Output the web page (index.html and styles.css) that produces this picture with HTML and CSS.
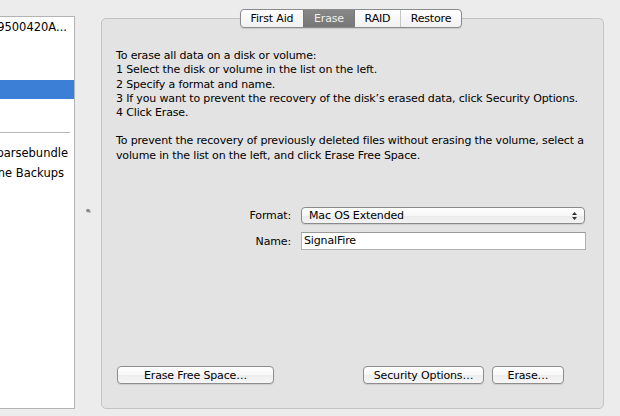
FILE: index.html
```html
<!DOCTYPE html>
<html lang="en">
<head>
  <meta charset="UTF-8">
  <title>Disk Utility - Erase</title>
  <link rel="stylesheet" href="styles.css">
</head>
<body>
  <div class="window">
    <!-- Disk list on the left, scrolled so only the tail of each name shows -->
    <div class="disk-list">
      <div class="row row-disk"><span>ST9500420A...</span></div>
      <div class="row"></div>
      <div class="row"></div>
      <div class="row selected"></div>
      <div class="row"></div>
      <div class="sep"></div>
      <div class="row row-image"><span>Disk.sparsebundle</span></div>
      <div class="row row-tm"><span>Time Machine Backups</span></div>
    </div>

    <div class="splitter"><span class="grip"></span></div>

    <div class="main">
      <div class="tabs">
        <div class="tab tab-aid">First Aid</div>
        <div class="tab tab-erase active">Erase</div>
        <div class="tab tab-raid">RAID</div>
        <div class="tab tab-restore">Restore</div>
      </div>
      <div class="panel">
        <p class="info">To erase all data on a disk or volume:<br>
        1 Select the disk or volume in the list on the left.<br>
        2 Specify a format and name.<br>
        3 If you want to prevent the recovery of the disk’s erased data, click Security Options.<br>
        4 Click Erase.</p>
        <p class="info">To prevent the recovery of previously deleted files without erasing the volume, select a<br>
        volume in the list on the left, and click Erase Free Space.</p>

        <div class="form">
          <div class="form-row">
            <label class="form-label">Format:</label>
            <div class="popup">
              <span>Mac OS Extended</span>
              <svg class="popup-arrows" width="7" height="10" viewBox="0 0 7 10">
                <path d="M1 4 L3.5 1 L6 4 Z M1 6 L3.5 9 L6 6 Z" fill="#333"/>
              </svg>
            </div>
          </div>
          <div class="form-row">
            <label class="form-label">Name:</label>
            <div class="text-field">SignalFire</div>
          </div>
        </div>

        <div class="buttons">
          <button class="btn btn-free">Erase Free Space…</button>
          <div class="buttons-right">
            <button class="btn btn-security">Security Options…</button>
            <button class="btn btn-erase">Erase…</button>
          </div>
        </div>
      </div>
    </div>
  </div>
</body>
</html>
```

FILE: styles.css
```css
body {
  margin: 0;
  background: #ececec;
  font-family: 'DejaVu Sans', 'Liberation Sans', sans-serif;
  font-size: 11px;
  letter-spacing: -0.15px;
  color: #000;
  width: 620px;
  height: 416px;
  overflow: hidden;
}
.window {
  display: flex;
  align-items: flex-start;
}

/* Left list */
.disk-list {
  margin-top: 16px;
  width: 74px;
  height: 391px;
  background: #fff;
  border: 1px solid #b4b4b4;
  border-left: none;
  overflow: hidden;
  font-size: 11.5px;
  letter-spacing: 0;
}
.row {
  height: 21px;
  line-height: 21px;
  white-space: nowrap;
  display: flex;
  justify-content: flex-end;
}
.row span {
  flex: none;
}
.row-disk { padding-right: 7px; }
.row-image { padding-right: 6px; height: 20px; line-height: 20px; }
.row-tm { padding-right: 10px; height: 20px; line-height: 20px; }
.row.selected {
  height: 19px;
  background: #3b7fd7;
}
.sep {
  height: 1px;
  width: 70px;
  background: #b8b8b8;
  margin: 12px 0 10px;
}

/* Splitter with the grip */
.splitter {
  width: 26px;
  height: 416px;
  display: flex;
  justify-content: center;
  padding-top: 209px;
  box-sizing: border-box;
}
.grip {
  width: 4px;
  height: 3px;
  margin-left: -1px;
  background: #8a8a8a;
  border-radius: 2px 2px 0 2px;
  box-shadow: 1px 1px 0 #c8c8c8;
}

/* Main tab area */
.main {
  margin-top: 9px;
  width: 503px;
  display: flex;
  flex-direction: column;
}
.tabs {
  align-self: center;
  display: flex;
  margin-left: -3px;
  height: 17px;
  border: 1px solid #8b8b8b;
  border-radius: 4px;
  background: linear-gradient(#ffffff, #f1f1f1);
  overflow: hidden;
  position: relative;
  z-index: 1;
  box-shadow: 0 1px 1px rgba(0, 0, 0, 0.12);
}
.tab {
  line-height: 17px;
  text-align: center;
  border-left: 1px solid #c6c6c6;
}
.tab-aid { width: 62px; border-left: none; }
.tab-erase { width: 50px; }
.tab-raid { width: 45px; }
.tab-restore { width: 60px; }
.tab.active {
  background: linear-gradient(#878787, #777777);
  color: #eeeeee;
  border-left-color: #777;
}
.tab.active + .tab {
  border-left-color: #777;
}
.panel {
  margin-top: -10px;
  height: 391px;
  box-sizing: border-box;
  background: #e3e3e3;
  border: 1px solid #c3c3c3;
  border-radius: 5px;
  padding: 30px 17px 24px 14px;
  display: flex;
  flex-direction: column;
}
.info {
  margin: 0 0 14px;
  line-height: 14.3px;
  white-space: nowrap;
}

/* Format / Name */
.form {
  margin-top: 30px;
  display: flex;
  flex-direction: column;
  gap: 8px;
}
.form-row {
  display: flex;
  align-items: center;
}
.form-label {
  flex: none;
  width: 175px;
  margin-right: 10px;
  text-align: right;
}
.popup {
  flex: none;
  width: 284px;
  height: 17px;
  box-sizing: border-box;
  border: 1px solid #8a8a8a;
  border-radius: 4px;
  background: linear-gradient(#ffffff 0%, #f6f6f6 50%, #ebebeb 51%, #f3f3f3 100%);
  display: flex;
  align-items: center;
  justify-content: space-between;
  padding: 0 6px 0 7px;
  box-shadow: 0 1px 1px rgba(0, 0, 0, 0.1);
}
.text-field {
  flex: none;
  width: 285px;
  height: 18px;
  box-sizing: border-box;
  border: 1px solid #b0b0b0;
  border-top-color: #9a9a9a;
  background: #fff;
  padding-left: 2px;
  line-height: 16px;
}

/* Bottom buttons */
.buttons {
  margin-top: auto;
  display: flex;
  justify-content: space-between;
  padding: 0 22px 0 1px;
}
.buttons-right {
  display: flex;
  gap: 8px;
}
.btn {
  height: 18px;
  padding: 0;
  border: 1px solid #8d8d8d;
  border-radius: 4px;
  background: linear-gradient(#ffffff 0%, #f7f7f7 50%, #ededed 51%, #f6f6f6 100%);
  font-family: 'DejaVu Sans', 'Liberation Sans', sans-serif;
  font-size: 11px;
  letter-spacing: -0.15px;
  color: #000;
  box-shadow: 0 1px 1px rgba(0, 0, 0, 0.1);
}
.btn-free { width: 157px; }
.btn-security { width: 121px; }
.btn-erase { width: 72px; }
```
